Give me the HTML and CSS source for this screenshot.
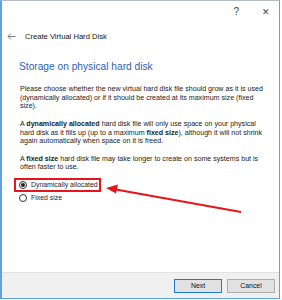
FILE: index.html
```html
<!DOCTYPE html>
<html lang="en">
<head>
    <meta charset="UTF-8">
    <title>Create Virtual Hard Disk</title>
    <link rel="stylesheet" href="styles.css">
</head>
<body>
    <div class="window">
        <div class="titlebar">
            <span class="title-btn help">?</span>
            <span class="title-btn close">&#x2715;</span>
        </div>

        <div class="wizard-head">
            <svg class="back" width="9" height="7" viewBox="0 0 9 7">
                <path d="M8.5 3.5H1 M4 0.5L1 3.5L4 6.5" fill="none" stroke="#7d7d7d" stroke-width="1"/>
            </svg>
            <span class="wizard-title">Create Virtual Hard Disk</span>
        </div>

        <div class="page">
            <h1 class="page-title">Storage on physical hard disk</h1>

            <p>Please choose whether the new virtual hard disk file should grow as it is used (dynamically allocated) or if it should be created at its maximum size (fixed size).</p>
            <p>A <b>dynamically allocated</b> hard disk file will only use space on your physical hard disk as it fills up (up to a maximum <b>fixed size</b>), although it will not shrink again automatically when space on it is freed.</p>
            <p>A <b>fixed size</b> hard disk file may take longer to create on some systems but is often faster to use.</p>

            <div class="options">
                <label class="option highlight">
                    <span class="radio checked"></span>
                    Dynamically allocated
                </label>
                <label class="option">
                    <span class="radio"></span>
                    Fixed size
                </label>
            </div>
        </div>

        <div class="footer">
            <button class="btn default">Next</button>
            <button class="btn">Cancel</button>
        </div>

        <!-- annotation arrow -->
        <svg class="pointer" width="282" height="300" viewBox="0 0 282 300">
            <line x1="113" y1="189" x2="241" y2="212" stroke="#e8141b" stroke-width="2"/>
            <polygon points="106,188 118,184.5 116,193.5" fill="#e8141b"/>
        </svg>
    </div>
</body>
</html>
```

FILE: styles.css
```css
* {
    margin: 0;
    padding: 0;
    box-sizing: border-box;
}

body {
    font-family: "Liberation Sans", Arial, sans-serif;
    color: #1e1e1e;
    background: #fff;
    width: 282px;
    height: 300px;
}

.window {
    position: relative;
    width: 280px;
    height: 299px;
    background: #fff;
    border: 1px solid #5ea2e3;
    border-left-width: 2px;
    border-top-color: #b4bec8;
    display: flex;
    flex-direction: column;
}

.titlebar {
    height: 22px;
    display: flex;
    justify-content: flex-end;
    align-items: center;
    gap: 23px;
    padding-right: 9px;
}

.title-btn {
    font-size: 9px;
    color: #444;
    line-height: 1;
}

.help {
    font-size: 10px;
}

.wizard-head {
    height: 26px;
    display: flex;
    align-items: center;
    padding-left: 5px;
}

.back {
    margin-right: 9px;
}

.wizard-title {
    font-size: 7.6px;
    color: #111;
}

.page {
    flex: 1;
    padding: 0 10px 0 18px;
}

.page-title {
    font-size: 10.2px;
    font-weight: 400;
    color: #2f5fb3;
    margin: 11px 0 11px -1px;
    line-height: 14px;
}

p {
    font-size: 7.1px;
    line-height: 8.7px;
    margin-bottom: 8.7px;
    color: #222;
}

b {
    font-weight: 700;
}

.options {
    display: flex;
    flex-direction: column;
    margin-left: -6px;
}

.option {
    display: flex;
    align-items: center;
    gap: 4px;
    font-size: 6.9px;
    height: 14px;
    padding-left: 3px;
    width: 87px;
    white-space: nowrap;
    border: 2px solid transparent;
}

.option.highlight {
    border-color: #e8141b;
    margin-top: -3px;
    margin-bottom: -1px;
}

.radio {
    width: 8px;
    height: 8px;
    border: 1px solid #333;
    border-radius: 50%;
    display: flex;
    align-items: center;
    justify-content: center;
}

.radio.checked::after {
    content: "";
    width: 4px;
    height: 4px;
    border-radius: 50%;
    background: #222;
}

.footer {
    height: 26px;
    background: #f0f0f0;
    border-top: 1px solid #e2e2e2;
    display: flex;
    justify-content: flex-end;
    align-items: center;
    gap: 5px;
    padding-right: 4px;
}

.btn {
    font-family: inherit;
    font-size: 6.9px;
    width: 48px;
    height: 14px;
    background: #e1e1e1;
    border: 1px solid #adadad;
    color: #111;
}

.btn.default {
    border: 1px solid #1a7bd6;
}

.pointer {
    position: absolute;
    left: -2px;
    top: -1px;
    pointer-events: none;
}
```
